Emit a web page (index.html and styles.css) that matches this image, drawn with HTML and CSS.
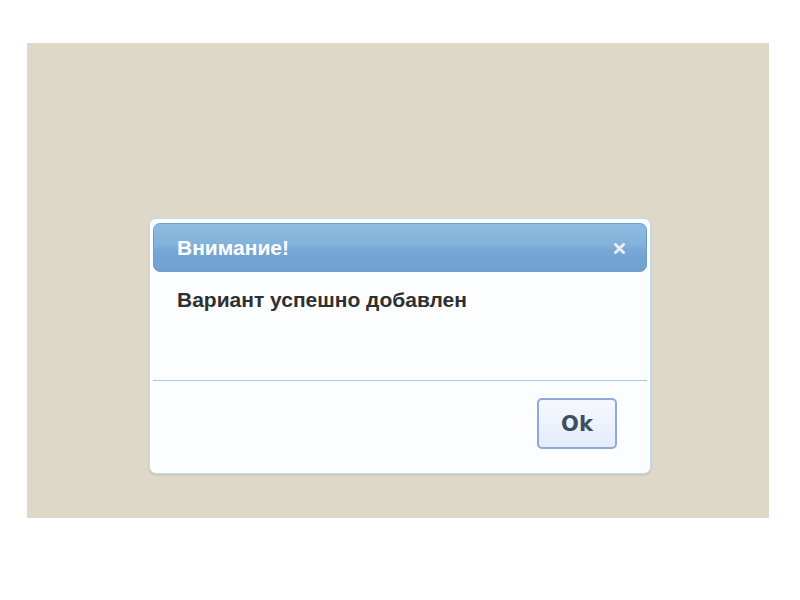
FILE: index.html
```html
<!DOCTYPE html>
<html lang="ru">
<head>
    <meta charset="UTF-8">
    <title>Внимание!</title>
    <link rel="stylesheet" href="styles.css">
</head>
<body>

<div class="stage">
    <div class="dialog">
        <div class="titlebar">
            <span class="title">Внимание!</span>
            <span class="close">
                <svg width="11" height="11" viewBox="0 0 11 11">
                    <path d="M1.5 1.5 L9.5 9.5 M9.5 1.5 L1.5 9.5" stroke="#e6edf5" stroke-width="3" stroke-linecap="round"/>
                </svg>
            </span>
        </div>
        <div class="content">Вариант успешно добавлен</div>
        <div class="buttonpane">
            <button class="btn">Ok</button>
        </div>
    </div>
</div>

</body>
</html>
```

FILE: styles.css
```css
body {
    margin: 0;
    background: #ffffff;
    font-family: "Liberation Sans", Arial, sans-serif;
}
.stage {
    width: 742px;
    height: 475px;
    margin: 43px 0 0 27px;
    padding-top: 175px;
    box-sizing: border-box;
    background: #ddd8c8;
}
.dialog {
    width: 502px;
    height: 256px;
    margin-left: 122px;
    box-sizing: border-box;
    padding: 4px 3px;
    background: #fbfdfe;
    border: 1px solid #c5dbec;
    border-radius: 7px;
    box-shadow: 0 1px 2px rgba(120, 110, 90, 0.25);
    display: flex;
    flex-direction: column;
}
.titlebar {
    height: 49px;
    box-sizing: border-box;
    display: flex;
    align-items: center;
    justify-content: space-between;
    padding: 0 21px 0 23px;
    border: 1px solid #6d9fcd;
    border-radius: 7px;
    background: linear-gradient(to bottom, #8fbbe0 0%, #82b1da 45%, #76a8d6 55%, #6ea1d1 100%);
}
.title {
    color: #ffffff;
    font-size: 21px;
    font-weight: bold;
    line-height: 24px;
}
.close {
    display: flex;
    margin-top: 1px;
}
.content {
    height: 109px;
    box-sizing: border-box;
    padding: 16px 0 0 24px;
    font-size: 21px;
    font-weight: bold;
    line-height: 24px;
    color: #303030;
    border-bottom: 1px solid #a8cbe6;
}
.buttonpane {
    display: flex;
    justify-content: flex-end;
    padding: 17px 30px 0 0;
}
.btn {
    width: 80px;
    height: 51px;
    padding: 0;
    font-family: "DejaVu Sans", Verdana, sans-serif;
    font-size: 21px;
    font-weight: bold;
    color: #3d4e5f;
    border: 2px solid #8ea8dc;
    border-radius: 5px;
    background: linear-gradient(to bottom, #f5f8fe, #e4ebfb);
    cursor: pointer;
}
```
